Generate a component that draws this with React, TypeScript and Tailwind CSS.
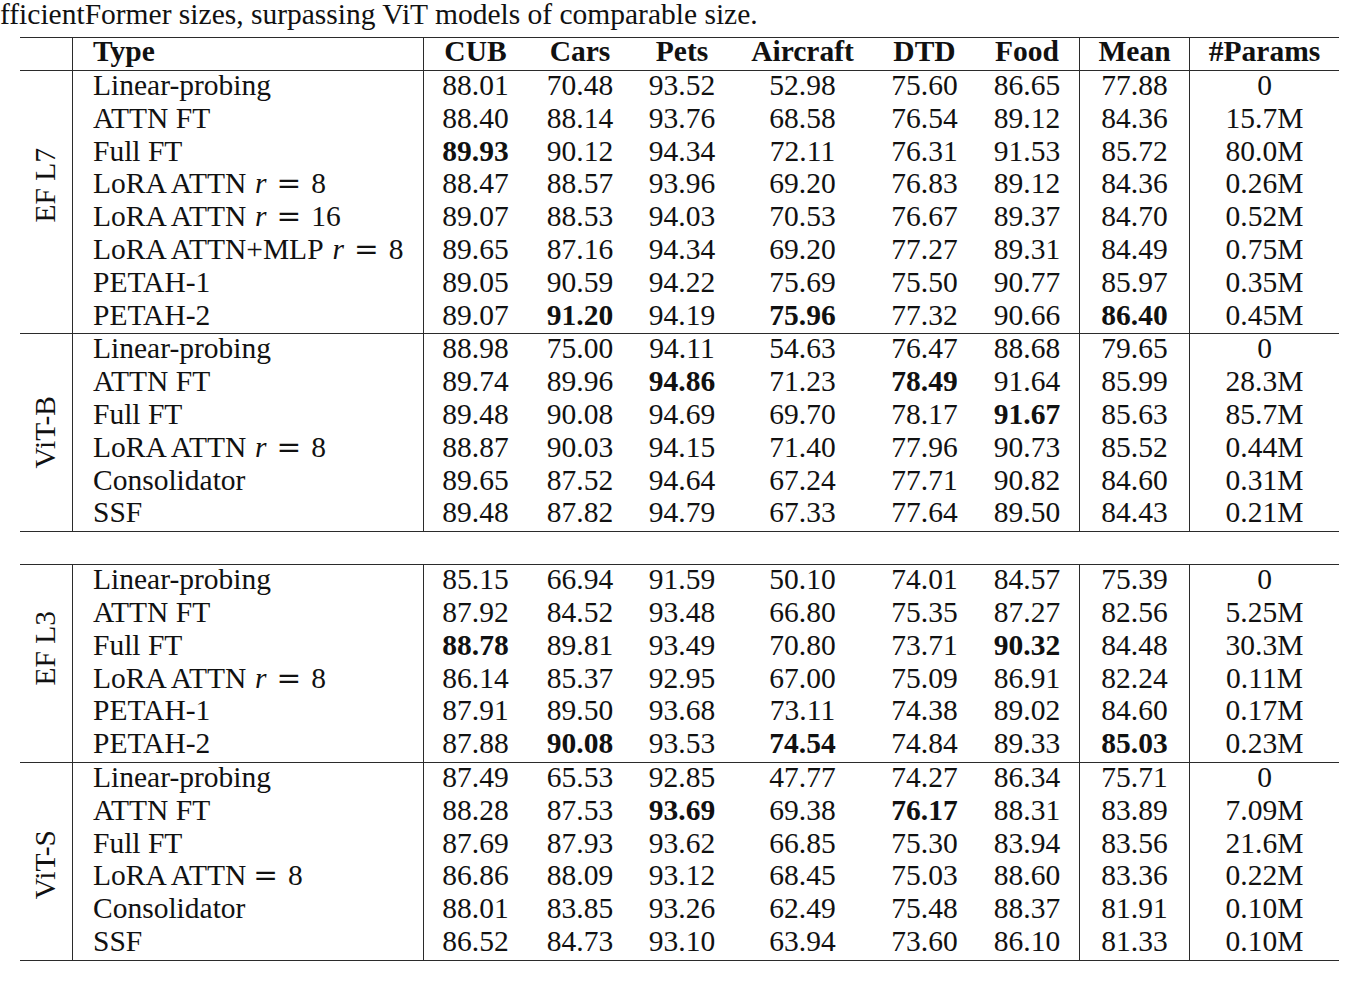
import React from "react";

type Row = { label: React.ReactNode; vals: string[] };

const B = "border-[#2b2b2b]";

const rEq = (n: string, withR = true) => (
  <>
    {withR ? (
      <span className="italic ml-[0.3em]">r</span>
    ) : (
      <span className="ml-[-0.1em]"></span>
    )}
    <span className="mx-[0.34em]" style={{ fontFamily: '"DejaVu Serif", serif' }}>
      =
    </span>
    <span>{n}</span>
  </>
);

const efl7: Row[] = [
  { label: "Linear-probing", vals: ["88.01", "70.48", "93.52", "52.98", "75.60", "86.65", "77.88", "0"] },
  { label: "ATTN FT", vals: ["88.40", "88.14", "93.76", "68.58", "76.54", "89.12", "84.36", "15.7M"] },
  { label: "Full FT", vals: ["*89.93", "90.12", "94.34", "72.11", "76.31", "91.53", "85.72", "80.0M"] },
  { label: <>LoRA ATTN{rEq("8")}</>, vals: ["88.47", "88.57", "93.96", "69.20", "76.83", "89.12", "84.36", "0.26M"] },
  { label: <>LoRA ATTN{rEq("16")}</>, vals: ["89.07", "88.53", "94.03", "70.53", "76.67", "89.37", "84.70", "0.52M"] },
  { label: <>LoRA ATTN+MLP{rEq("8")}</>, vals: ["89.65", "87.16", "94.34", "69.20", "77.27", "89.31", "84.49", "0.75M"] },
  { label: "PETAH-1", vals: ["89.05", "90.59", "94.22", "75.69", "75.50", "90.77", "85.97", "0.35M"] },
  { label: "PETAH-2", vals: ["89.07", "*91.20", "94.19", "*75.96", "77.32", "90.66", "*86.40", "0.45M"] },
];

const vitb: Row[] = [
  { label: "Linear-probing", vals: ["88.98", "75.00", "94.11", "54.63", "76.47", "88.68", "79.65", "0"] },
  { label: "ATTN FT", vals: ["89.74", "89.96", "*94.86", "71.23", "*78.49", "91.64", "85.99", "28.3M"] },
  { label: "Full FT", vals: ["89.48", "90.08", "94.69", "69.70", "78.17", "*91.67", "85.63", "85.7M"] },
  { label: <>LoRA ATTN{rEq("8")}</>, vals: ["88.87", "90.03", "94.15", "71.40", "77.96", "90.73", "85.52", "0.44M"] },
  { label: "Consolidator", vals: ["89.65", "87.52", "94.64", "67.24", "77.71", "90.82", "84.60", "0.31M"] },
  { label: "SSF", vals: ["89.48", "87.82", "94.79", "67.33", "77.64", "89.50", "84.43", "0.21M"] },
];

const efl3: Row[] = [
  { label: "Linear-probing", vals: ["85.15", "66.94", "91.59", "50.10", "74.01", "84.57", "75.39", "0"] },
  { label: "ATTN FT", vals: ["87.92", "84.52", "93.48", "66.80", "75.35", "87.27", "82.56", "5.25M"] },
  { label: "Full FT", vals: ["*88.78", "89.81", "93.49", "70.80", "73.71", "*90.32", "84.48", "30.3M"] },
  { label: <>LoRA ATTN{rEq("8")}</>, vals: ["86.14", "85.37", "92.95", "67.00", "75.09", "86.91", "82.24", "0.11M"] },
  { label: "PETAH-1", vals: ["87.91", "89.50", "93.68", "73.11", "74.38", "89.02", "84.60", "0.17M"] },
  { label: "PETAH-2", vals: ["87.88", "*90.08", "93.53", "*74.54", "74.84", "89.33", "*85.03", "0.23M"] },
];

const vits: Row[] = [
  { label: "Linear-probing", vals: ["87.49", "65.53", "92.85", "47.77", "74.27", "86.34", "75.71", "0"] },
  { label: "ATTN FT", vals: ["88.28", "87.53", "*93.69", "69.38", "*76.17", "88.31", "83.89", "7.09M"] },
  { label: "Full FT", vals: ["87.69", "87.93", "93.62", "66.85", "75.30", "83.94", "83.56", "21.6M"] },
  { label: <>LoRA ATTN{rEq("8", false)}</>, vals: ["86.86", "88.09", "93.12", "68.45", "75.03", "88.60", "83.36", "0.22M"] },
  { label: "Consolidator", vals: ["88.01", "83.85", "93.26", "62.49", "75.48", "88.37", "81.91", "0.10M"] },
  { label: "SSF", vals: ["86.52", "84.73", "93.10", "63.94", "73.60", "86.10", "81.33", "0.10M"] },
];

const COLW = [
  "w-[103px]",
  "w-[106px]",
  "w-[98px]",
  "w-[143px]",
  "w-[101px]",
  "w-[105px]",
  "w-[110px]",
  "w-[149px]",
];

function Cell({ v, i }: { v: string; i: number }) {
  const bold = v.startsWith("*");
  const txt = bold ? v.slice(1) : v;
  const br = i === 5 || i === 6 ? `border-r ${B}` : "";
  return (
    <div className={`${COLW[i]} ${br} shrink-0 flex items-center justify-center pb-[4px]`}>
      <span className={bold ? "font-bold" : ""}>{txt}</span>
    </div>
  );
}

function DataRow({ row }: { row: Row }) {
  return (
    <div className="flex h-[32.8px]">
      <div className={`w-[351px] shrink-0 border-r ${B} pl-[20px] flex items-center pb-[4px] whitespace-nowrap`}>
        {row.label}
      </div>
      {row.vals.map((v, i) => (
        <Cell key={i} v={v} i={i} />
      ))}
    </div>
  );
}

function Group({ name, rows, shift }: { name: string; rows: Row[]; shift: string }) {
  return (
    <div className="flex">
      <div className={`w-[53px] shrink-0 border-r ${B} flex items-center justify-center ${shift}`}>
        <span className="[writing-mode:vertical-rl] rotate-180 whitespace-nowrap leading-none">{name}</span>
      </div>
      <div className="flex flex-col">
        {rows.map((r, i) => (
          <DataRow key={i} row={r} />
        ))}
      </div>
    </div>
  );
}

const HEAD = ["CUB", "Cars", "Pets", "Aircraft", "DTD", "Food", "Mean", "#Params"];

export default function App() {
  return (
    <div
      className="w-[1352px] h-[995px] overflow-hidden bg-white text-[#111] text-[29.5px] leading-[32.8px]"
      style={{ fontFamily: '"Liberation Serif", "Times New Roman", serif' }}
    >
      <div className="h-[37px]">
        <div className="whitespace-nowrap leading-[28.8px]">
          fficientFormer sizes, surpassing ViT models of comparable size.
        </div>
      </div>
      <div className="ml-[20px] w-[1319px]">
        <div className={`border-t ${B}`}>
          <div className="flex h-[32px]">
            <div className={`w-[53px] shrink-0 border-r ${B}`}></div>
            <div className={`w-[351px] shrink-0 border-r ${B} pl-[20px] flex items-center pb-[6px] font-bold`}>
              Type
            </div>
            {HEAD.map((h, i) => (
              <div
                key={h}
                className={`${COLW[i]} ${i === 5 || i === 6 ? `border-r ${B}` : ""} shrink-0 flex items-center justify-center pb-[6px] font-bold`}
              >
                {h}
              </div>
            ))}
          </div>
        </div>
        <div className={`border-t ${B}`}>
          <Group name="EF L7" rows={efl7} shift="pb-[34px]" />
        </div>
        <div className={`border-t border-b ${B}`}>
          <Group name="ViT-B" rows={vitb} shift="" />
        </div>
        <div className="h-[32px]"></div>
        <div className={`border-t ${B}`}>
          <Group name="EF L3" rows={efl3} shift="pb-[30px]" />
        </div>
        <div className={`border-t border-b ${B}`}>
          <Group name="ViT-S" rows={vits} shift="pt-[6px]" />
        </div>
      </div>
    </div>
  );
}
